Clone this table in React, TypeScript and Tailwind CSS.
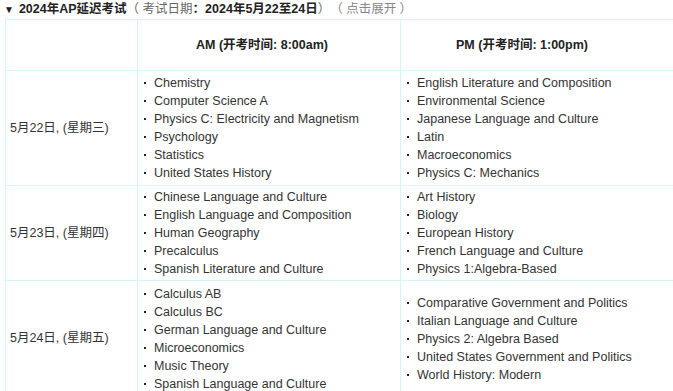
import React from "react";

const rows = [
  {
    date: "5月22日, (星期三)",
    h: "h-[115px]",
    am: ["Chemistry", "Computer Science A", "Physics C: Electricity and Magnetism", "Psychology", "Statistics", "United States History"],
    pm: ["English Literature and Composition", "Environmental Science", "Japanese Language and Culture", "Latin", "Macroeconomics", "Physics C: Mechanics"],
  },
  {
    date: "5月23日, (星期四)",
    h: "h-[95px]",
    am: ["Chinese Language and Culture", "English Language and Composition", "Human Geography", "Precalculus", "Spanish Literature and Culture"],
    pm: ["Art History", "Biology", "European History", "French Language and Culture", "Physics 1:Algebra-Based"],
  },
  {
    date: "5月24日, (星期五)",
    h: "h-[116px]",
    am: ["Calculus AB", "Calculus BC", "German Language and Culture", "Microeconomics", "Music Theory", "Spanish Language and Culture"],
    pm: ["Comparative Government and Politics", "Italian Language and Culture", "Physics 2: Algebra Based", "United States Government and Politics", "World History: Modern"],
  },
];

function List({ items }: { items: string[] }) {
  return (
    <ul className="pl-[6px]">
      {items.map((t) => (
        <li key={t} className="flex items-center h-[18px] leading-[18px]">
          <span className="w-[2px] h-[2px] bg-[#222] mr-[8px] shrink-0" />
          <span>{t}</span>
        </li>
      ))}
    </ul>
  );
}

export default function App() {
  return (
    <div
      className="w-[673px] h-[391px] overflow-hidden bg-white text-[12.5px] text-[#333]"
      style={{ fontFamily: '"Liberation Sans", Arial, "Noto Sans CJK SC", sans-serif' }}
    >
      <div className="h-[19px] flex items-center pl-[4px] leading-[19px] whitespace-nowrap">
        <span className="text-[10px] mr-[5px] text-[#222]">▼</span>
        <span className="font-bold text-[#222]">2024年AP延迟考试</span>
        <span className="text-[#666]">（ 考试日期</span>
        <span className="font-bold text-[#222]">：2024年5月22至24日</span>
        <span className="text-[#666]"> ）</span>
        <span className="text-[#888]">（ 点击展开 ）</span>
      </div>
      <div className="pl-[5px]">
        <table className="table-fixed border-collapse w-[700px]">
          <colgroup>
            <col className="w-[132px]" />
            <col className="w-[263px]" />
            <col className="w-[305px]" />
          </colgroup>
          <tbody>
            <tr className="h-[51px]">
              <td className="border border-[#d4f8f8]" />
              <td className="border border-[#d4f8f8] align-middle font-bold text-[#222] pl-[58px] whitespace-nowrap">
                AM (开考时间: 8:00am)
              </td>
              <td className="border border-[#d4f8f8] align-middle font-bold text-[#222] pl-[55px] whitespace-nowrap">
                PM (开考时间: 1:00pm)
              </td>
            </tr>
            {rows.map((r) => (
              <tr key={r.date} className={r.h}>
                <td className="border border-[#d4f8f8] align-middle pl-[4px] whitespace-nowrap">{r.date}</td>
                <td className="border border-[#d4f8f8] align-middle whitespace-nowrap">
                  <List items={r.am} />
                </td>
                <td className="border border-[#d4f8f8] align-middle whitespace-nowrap">
                  <List items={r.pm} />
                </td>
              </tr>
            ))}
          </tbody>
        </table>
      </div>
    </div>
  );
}
